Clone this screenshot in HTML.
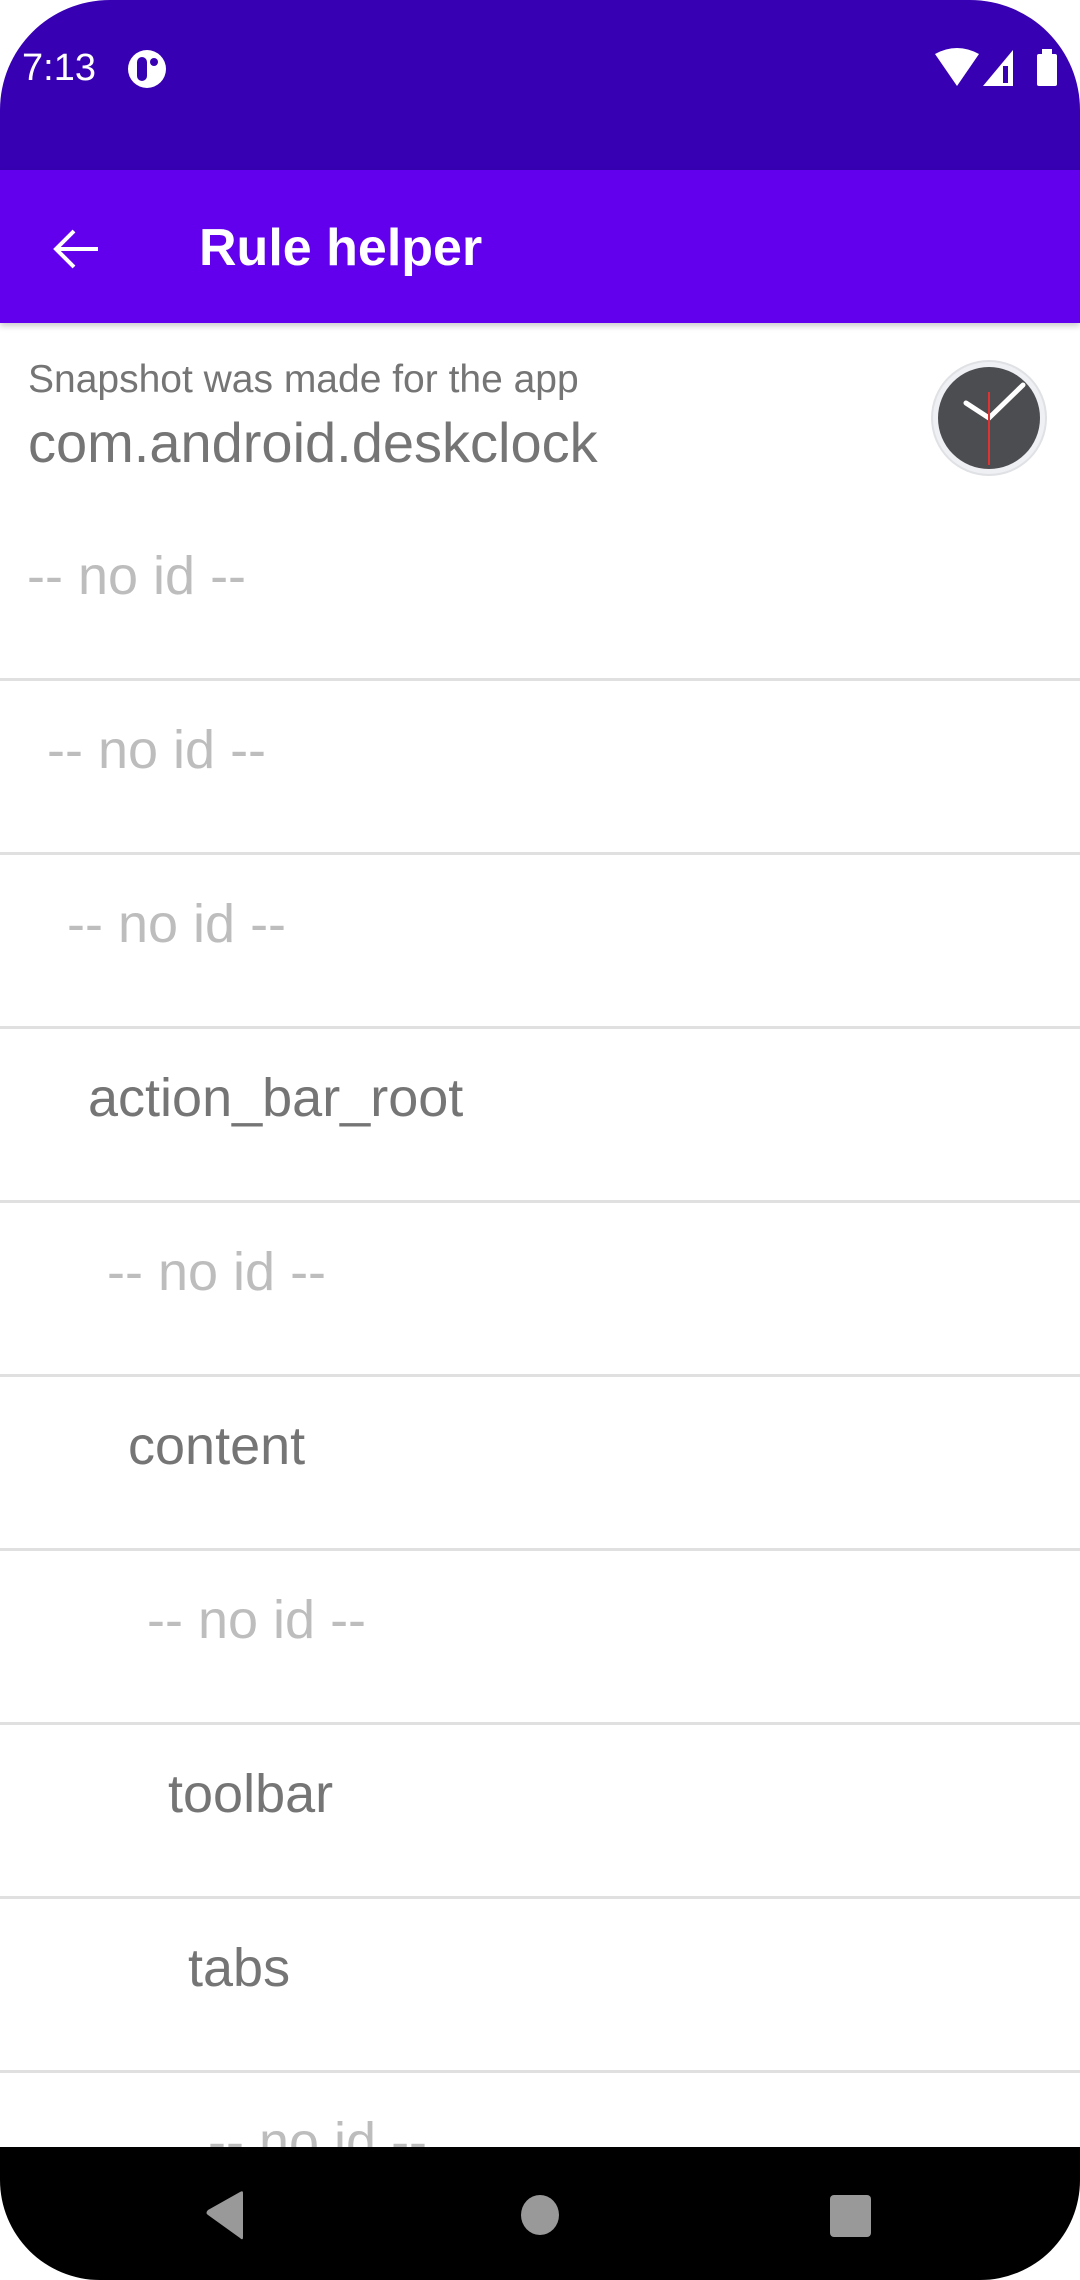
<!DOCTYPE html>
<html><head><meta charset="utf-8"><style>
*{margin:0;padding:0;box-sizing:border-box}
body{width:1080px;height:2280px;position:relative;overflow:hidden;background:#fff;font-family:"Liberation Sans",sans-serif}
.a{position:absolute;white-space:nowrap}
.sep{position:absolute;left:0;width:1080px;height:3px;background:#e0e0e0}
.r{position:absolute;font-size:54px;line-height:60px}
.n{color:#bdbdbd}.i{color:#757575}
</style></head><body>
<div class="a" style="left:0;top:0;width:1080px;height:170px;background:#3700B3;border-radius:110px 110px 0 0"></div>
<div class="a" style="left:22px;top:44px;color:#fff;font-size:38px;line-height:48px">7:13</div>
<div class="a" style="left:128px;top:50px;width:38px;height:38px;border-radius:50%;background:#fff"></div>
<div class="a" style="left:137px;top:57px;width:10px;height:24px;border-radius:5px;background:#3700B3"></div>
<div class="a" style="left:150px;top:58px;width:8px;height:8px;border-radius:50%;background:#3700B3"></div>
<svg class="a" style="left:935px;top:48px" width="130" height="40" viewBox="0 0 130 40">
<path d="M0 6 Q22 -6 44 6 L22 38 Z" fill="#fff"/>
<path d="M48 38 L78 2 L78 38 Z" fill="#fff"/>
<rect x="68" y="18" width="5" height="17" fill="#3700B3"/>
<rect x="102" y="6" width="20" height="32" rx="2" fill="#fff"/><rect x="107" y="1" width="10" height="6" fill="#fff"/>
</svg>
<div class="a" style="left:0;top:170px;width:1080px;height:153px;background:#6200EE;box-shadow:0 3px 6px rgba(0,0,0,.2)"></div>
<svg class="a" style="left:52px;top:224px" width="50" height="50" viewBox="0 0 50 50"><path d="M46 25 H6 M22 7 L4 25 L22 43" stroke="#fff" stroke-width="4" fill="none"/></svg>
<div class="a" style="left:199px;top:216px;color:#fff;font-size:52px;font-weight:bold;line-height:64px">Rule helper</div>
<div class="a" style="left:28px;top:356px;color:#757575;font-size:39px;line-height:48px">Snapshot was made for the app</div>
<div class="a" style="left:28px;top:411px;color:#757575;font-size:56px;line-height:64px">com.android.deskclock</div>
<svg class="a" style="left:928px;top:357px" width="122" height="122" viewBox="0 0 122 122">
<circle cx="61" cy="61" r="58" fill="#dfe1e5"/><circle cx="61" cy="61" r="56" fill="#eef0f3"/>
<circle cx="61" cy="61" r="51" fill="#4b4d50"/>
<path d="M61 61 L38 46 M61 61 L95 28" stroke="#fff" stroke-width="5" stroke-linecap="round"/>
<path d="M61 35 V108" stroke="#d33" stroke-width="2"/>
</svg>
<div class="r n" style="left:27px;top:546px">-- no id --</div>
<div class="sep" style="top:678px"></div>
<div class="r n" style="left:47px;top:720px">-- no id --</div>
<div class="sep" style="top:852px"></div>
<div class="r n" style="left:67px;top:894px">-- no id --</div>
<div class="sep" style="top:1026px"></div>
<div class="r i" style="left:88px;top:1068px">action_bar_root</div>
<div class="sep" style="top:1200px"></div>
<div class="r n" style="left:107px;top:1242px">-- no id --</div>
<div class="sep" style="top:1374px"></div>
<div class="r i" style="left:128px;top:1416px">content</div>
<div class="sep" style="top:1548px"></div>
<div class="r n" style="left:147px;top:1590px">-- no id --</div>
<div class="sep" style="top:1722px"></div>
<div class="r i" style="left:168px;top:1764px">toolbar</div>
<div class="sep" style="top:1896px"></div>
<div class="r i" style="left:188px;top:1938px">tabs</div>
<div class="sep" style="top:2070px"></div>
<div class="r n" style="left:208px;top:2112px">-- no id --</div>
<div class="a" style="left:0;top:2147px;width:1080px;height:133px;background:#000;border-radius:0 0 100px 100px"></div>
<svg class="a" style="left:0;top:2147px" width="1080" height="133" viewBox="0 0 1080 133">
<path d="M243 46 L243 90 Q243 94 240 91 L208 68 Q205 66 208 63 L240 45 Q243 43 243 46Z" fill="#999"/>
<ellipse cx="540" cy="68" rx="19" ry="20" fill="#999"/>
<rect x="830" y="48" width="41" height="42" rx="4" fill="#999"/>
</svg>
</body></html>
